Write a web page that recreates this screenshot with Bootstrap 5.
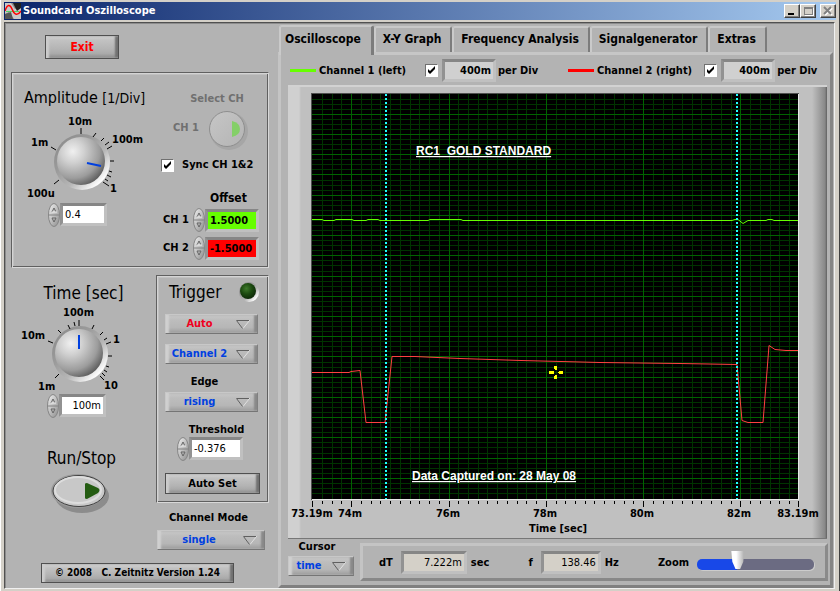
<!DOCTYPE html>
<html lang="en">
<head>
<meta charset="utf-8">
<meta name="viewport" content="width=device-width, initial-scale=1">
<title>Soundcard Oszilloscope</title>
<link href="https://cdn.jsdelivr.net/npm/bootstrap@5.3.0/dist/css/bootstrap.min.css" rel="stylesheet">
<style>
:root{--face:#b3b3b3;--blue:#0040e0}
body{background:#d4d0c8;font:bold 11px/14px "DejaVu Sans Condensed","DejaVu Sans",sans-serif;color:#000;padding:2px 3px 2px 3px;border-left:1px solid #fff;border-right:1px solid #404040}
svg{display:block}
svg text{font:bold 11px "DejaVu Sans Condensed","DejaVu Sans",sans-serif}
svg .note text{font:bold 12px "Liberation Sans",Arial,sans-serif}
.titlebar{background:linear-gradient(90deg,#0a246a,#a6caf0);height:18px;color:#fff;padding:0 0 0 1px}
.titlebar h1{font:bold 11px/18px "DejaVu Sans Condensed","DejaVu Sans",sans-serif;margin:0 0 0 2px}
.winbtn{width:16px;height:14px;padding:0;background:#d4d0c8;border:1px solid;border-color:#fff #404040 #404040 #fff;box-shadow:inset -1px -1px #808080}
.client{background:var(--face);margin-top:2px;border:1px solid;border-color:#505050 #f0f0f0 #f0f0f0 #505050;box-shadow:inset 1px 1px #8c8c8c;margin-right:1px}
.controls{width:273px;padding:12px 9px 2px 6px}
.groove{border:1px solid;border-color:#606060 #d8d8d8 #d8d8d8 #606060;box-shadow:inset 1px 1px #d4d4d4,inset -1px -1px #606060,inset 2px 2px #c0c0c0}
.push{font:inherit;color:#000;border:1px solid #505050;border-radius:0;padding:0;text-align:center;
background:linear-gradient(180deg,#d4d4d4 0,#c2c2c2 4px,#b4b4b4 60%,#aaa 80%,#8a8a8a);box-shadow:inset 3px 0 2px #ccc,inset -3px 0 2px #707070}
.exit{width:74px;height:24px;margin-left:34px;color:#f00;font-size:12px}
.autoset{width:95px;height:21px;margin-top:12px}
.about{width:193px;height:20px;font-size:10px;white-space:pre;margin:13px 0 0 30px}
.big{font-size:17px;font-weight:normal;line-height:24px;margin:0}
.amphead{font-size:16px}
.mid{font-size:14px}
.pick{appearance:none;font:inherit;color:var(--blue);height:20px;width:93px;border:1px solid;border-color:#c8c8c8 #808080 #757575 #c8c8c8;border-radius:0;padding:0 24px 0 0;text-align:center;text-align-last:center;
background:url("data:image/svg+xml,%3Csvg xmlns='http://www.w3.org/2000/svg' width='14' height='9'%3E%3Cpath d='M0 .5H13.5L7 8.5' fill='none' stroke='%23e0e0e0'/%3E%3Cpath d='M13 .5H.5L6.500 8.500' fill='none' stroke='%23606060'/%3E%3C/svg%3E") no-repeat right 7px center,linear-gradient(180deg,#c8c8c8 0,#bdbdbd 5px,#b6b6b6 70%,#9c9c9c);box-shadow:inset 3px 0 2px #d0d0d0,inset -3px 0 2px #888}
.pick.stop{color:#f00020}
.pick.mode{width:108px;margin:5px 0 0 1px}
.well{font:inherit;color:#000;border:3px solid;border-color:#868686 #c0c0c0 #c0c0c0 #929292;border-radius:0;padding:0 2px;min-width:0;height:23px;background:#fff}
.well.plain{font-weight:normal}
.well.ch1{background:#66ff00}
.well.ch2{background:#f00}
.well.shade{background:#d0d0d0;margin-right:2px}
.well.tan{background:#d4d0c8;font-weight:normal}
.w-num{width:47px}
.w-off{width:54px}
.w-dt{width:66px}
.w-freq{width:60px}
.tick{appearance:none;width:13px;height:13px;margin:0;border:1px solid;border-color:#707070 #fff #fff #707070;background:#fff;flex:none}
.tick:checked{background:#fff url("data:image/svg+xml,%3Csvg xmlns='http://www.w3.org/2000/svg' width='9' height='9'%3E%3Cpath d='M1 3v3l2 2 5-5V0L3 5z'/%3E%3C/svg%3E") no-repeat center}
.muted{color:#707070}
.amp{margin-top:13px;padding-bottom:7px}
.knobcol{width:137px}
.amp .knobcol{padding-top:13px}
.amp svg.knob{margin-top:3px}
.time{padding-top:6px}
.numrow{padding-left:36px}
.chcol{width:112px;padding-top:19px}
.offset{font-size:12px;padding:19px 0 3px 61px}
.chrow{padding-left:14px}
.trigger{width:113px;padding:4px 8px 8px}
.trigger .pick{margin-top:10px}
.trigger label{margin-top:11px}
.trigger label + .pick{margin-top:3px}
.lower{margin-top:7px}
.runstop{padding-top:28px}
.flat{border:0;background:none;padding:0}
/* tabs and display */
.tabs{padding:2px 0 0 1px;margin-bottom:-3px;position:relative}
.tabs .tab{font:bold 12px/20px "DejaVu Sans Condensed","DejaVu Sans",sans-serif;color:#000;background:var(--face);border:0;border-left:2px solid #cacaca;border-right:2px solid #7c7c7c;border-top:2px solid #c8c8c8;border-radius:3px 3px 0 0;height:26px;padding:0 9px 2px 7px;margin-top:1px;margin-bottom:3px}
.tabs .tab.active{height:30px;margin:0;padding:0 10px 5px 4px;border-right-width:3px}
.sheet{border:3px solid;border-color:#c6c6c6 #858585 #808080 #c4c4c4;margin-right:1px}
.legend-row{padding:4px 0 3px 9px}
.legend-row label{min-width:94px;margin-right:12px}
.swatch{width:26px;height:3px;flex:none;margin-right:3px}
.green{background:#66ff00}
.red{background:#f00}
.screen{margin:0 3px 0 7px;border-top:2px solid #d2d2d2;border-bottom:1px solid #777;background:linear-gradient(90deg,#d0d0d0 0,#d0d0d0 11px,#c0c0c0 13px,#c0c0c0 calc(100% - 15px),#888 calc(100% - 2px),#606060)}
.ridge{border:3px solid;border-color:#c4c4c4 #8a8a8a #888 #c4c4c4;margin:4px 2px 0 6px;padding:1px 11px 0 16px;min-height:38px}
.cursorbox{margin-left:7px;width:66px;padding-top:1px}
.cursorbox .pick{width:66px;margin-top:2px}
.zoomer{appearance:none;width:117px;height:20px;background:none;margin:4px 0 0}
.zoomer::-webkit-slider-runnable-track{height:11px;border-radius:5px;background:linear-gradient(90deg,#1848e8 34%,#6b6b82 34%);box-shadow:1px 1px #ccc}
.zoomer::-webkit-slider-thumb{appearance:none;width:13px;height:18px;margin-top:-8px;background:linear-gradient(90deg,#fff 40%,#b0b0b0);clip-path:polygon(0 0,100% 0,92% 60%,68% 100%,32% 100%,8% 60%)}
</style>
</head>
<body class="min-vh-100 d-flex flex-column">
<svg width="0" height="0" class="position-absolute" aria-hidden="true">
  <defs>
    <linearGradient id="rim" x1="0" y1="0" x2="1" y2="1"><stop offset="0" stop-color="#888"/><stop offset=".35" stop-color="#9a9a9a"/><stop offset=".6" stop-color="#b6b6b6"/><stop offset=".85" stop-color="#fff"/></linearGradient>
    <radialGradient id="dome" cx=".33" cy=".3" r=".8"><stop offset="0" stop-color="#f0f0f0"/><stop offset=".3" stop-color="#d0d0d0"/><stop offset=".7" stop-color="#9c9c9c"/><stop offset="1" stop-color="#505050"/></radialGradient>
    <linearGradient id="arrowfill" x1="0" y1="0" x2="1" y2="1"><stop offset="0" stop-color="#f2f2f2"/><stop offset="1" stop-color="#8c8c8c"/></linearGradient>
    <linearGradient id="soft" x1="0" y1="0" x2="1" y2="1"><stop offset="0" stop-color="#c6c6c6"/><stop offset="1" stop-color="#b4b4b4"/></linearGradient>
    <radialGradient id="led" cx=".4" cy=".35" r=".7"><stop offset="0" stop-color="#3f7a2c"/><stop offset=".5" stop-color="#1c4a10"/><stop offset="1" stop-color="#0c2608"/></radialGradient>
    <symbol id="spin" viewBox="0 0 12 24">
      <ellipse cx="6" cy="12" rx="5.500" ry="11.500" fill="url(#arrowfill)" stroke="#858585"/>
      <path d="M1 12h10" stroke="#808080"/><path d="M4 9 6 5 8 9M4 15h4L6 19z" fill="none" stroke="#666"/>
      <path d="M4 9h5" stroke="#eee"/>
    </symbol>
  </defs>
</svg>

<header class="titlebar d-flex align-items-center">
  <svg width="16" height="16" aria-hidden="true"><rect width="16" height="16" fill="#8a8a8a"/><path d="M0 0h6l4 6 6-2v12H9L4 9 0 11z" fill="#c9c9c9"/><path d="M8 0h8v5l-4 3z" fill="#202020"/><path d="M0 11l6-2 2 7H0z" fill="#555"/><path d="M1 8.500h13" stroke="#50d060"/><path d="M0 8C2 1 5 1 7 6s5 8 9 2" fill="none" stroke="#f00" stroke-width="1.500"/></svg>
  <h1>Soundcard Oszilloscope</h1>
  <div class="ms-auto d-flex">
    <button class="winbtn" aria-label="Minimize"><svg width="14" height="12"><path d="M3 8h6v2H3z"/></svg></button>
    <button class="winbtn" aria-label="Maximize" disabled><svg width="14" height="12" fill="none" shape-rendering="crispEdges"><path d="M3.500 2.500h8v7h-8zM3 3.500h9" stroke="#808080"/><path d="M12.500 3v7.500H4" stroke="#fff"/></svg></button>
    <button class="winbtn ms-1" aria-label="Close" disabled><svg width="14" height="12" fill="none"><path d="M4 3l7 7M11 3l-7 7" stroke="#fff" stroke-width="2"/><path d="M3 2l7 7M10 2L3 9" stroke="#808080" stroke-width="2"/></svg></button>
  </div>
</header>

<main class="client d-flex flex-grow-1">
  <aside class="controls flex-shrink-0">
    <button class="push exit d-block">Exit</button>

    <section class="groove amp d-flex" aria-label="Amplitude">
      <div class="knobcol">
        <h2 class="big amphead ps-2 ms-1 text-nowrap">Amplitude <span class="mid">[1/Div]</span></h2>
        <svg class="knob" width="137" height="90" viewBox="12 113 137 90" role="img" aria-label="Amplitude knob">
          <circle cx="82" cy="162" r="28" fill="url(#rim)"/><circle cx="81" cy="161" r="24" fill="url(#dome)"/>
          <path d="M87 163l14 3" stroke="#0040e0" stroke-width="2"/>
          <path d="M81 128v6M51 147l5 3M54 184l5-4M93 137l3-4M101 141l3-3M105 145l4-3M107 149l5-3M110 161h4M109 171l3 1M107 175l4 2M105 179l3 2M103 182l6 4" stroke="#000"/>
          <text x="68" y="125">10m</text><text x="31" y="146">1m</text><text x="112" y="143">100m</text><text x="27" y="197">100u</text><text x="110" y="192">1</text>
        </svg>
        <div class="d-flex numrow">
          <svg class="flex-shrink-0" width="12" height="24"><use href="#spin"/></svg>
          <input class="well plain w-num" aria-label="Amplitude per division" value="0.4">
        </div>
      </div>
      <div class="chcol d-flex flex-column">
        <div class="muted text-center ps-4">Select CH</div>
        <div class="d-flex align-items-center muted ps-4">
          <span class="text-nowrap">CH 1</span>
          <button class="flat ms-1" aria-label="Select channel 1" disabled><svg width="46" height="44"><circle cx="26" cy="25" r="19" fill="#a6a6a6"/><circle cx="24" cy="23" r="17.500" fill="url(#soft)" stroke="#8e8e8e"/><path d="M29 15q8 2 8 8t-8 8z" fill="#84cf68"/></svg></button>
        </div>
        <label class="d-flex align-items-center gap-2 text-nowrap mt-2 ps-2 ms-1"><input class="tick" type="checkbox" checked> Sync CH 1&amp;2</label>
        <div class="offset">Offset</div>
        <label class="d-flex align-items-center chrow"><span class="text-nowrap me-1">CH 1</span>
          <svg class="flex-shrink-0" width="12" height="24"><use href="#spin"/></svg><input class="well ch1 w-off" value="1.5000"></label>
        <label class="d-flex align-items-center chrow mt-1"><span class="text-nowrap me-1">CH 2</span>
          <svg class="flex-shrink-0" width="12" height="24"><use href="#spin"/></svg><input class="well ch2 w-off" value="-1.5000"></label>
      </div>
    </section>

    <div class="d-flex justify-content-between lower">
      <section class="knobcol time" aria-label="Time">
        <h2 class="big text-center ps-2">Time [sec]</h2>
        <svg width="137" height="89" viewBox="12 306 137 89" role="img" aria-label="Time knob">
          <circle cx="81" cy="355" r="28" fill="url(#rim)"/><circle cx="80" cy="354" r="24" fill="url(#dome)"/>
          <path d="M80 336v14" stroke="#0040e0" stroke-width="2"/>
          <path d="M80 321v6M49 342l5 2M56 379l4-4M59 331l3 3M69 326l2 4M75 323l1 4M93 330l2-4M101 336l3-3M105 341l3-2M107 345l5-2M109 357h4M107 367l3 1M105 371l3 2M103 374l3 3M101 377l4 4" stroke="#000"/>
          <text x="64" y="317">100m</text><text x="22" y="340">10m</text><text x="114" y="344">1</text><text x="39" y="391">1m</text><text x="105" y="390">10</text>
        </svg>
        <div class="d-flex numrow">
          <svg class="flex-shrink-0" width="12" height="24"><use href="#spin"/></svg>
          <input class="well plain w-num text-end" aria-label="Time per division" value="100m">
        </div>
        <h2 class="big text-center runstop ps-1">Run/Stop</h2>
        <button class="flat d-block mx-auto" aria-label="Run or stop"><svg width="64" height="46"><ellipse cx="34" cy="26" rx="27" ry="17" fill="#8c8c8c"/><ellipse cx="30" cy="21" rx="27" ry="17" fill="#999"/><ellipse cx="31" cy="21" rx="26" ry="15.500" fill="#c8c8c8" stroke="#404040"/><ellipse cx="30" cy="20" rx="23" ry="13" fill="none" stroke="#ddd" stroke-width="2"/><path d="M37 14q0-1 2-1l11 5q3 2 0 5l-11 6q-2 0-2-1z" fill="#245c12"/></svg></button>
      </section>

      <div>
        <section class="trigger groove d-flex flex-column" aria-label="Trigger">
          <div class="d-flex align-items-center justify-content-between ps-1"><h2 class="big">Trigger</h2>
            <svg width="22" height="22" role="img" aria-label="Trigger light off"><circle cx="11" cy="11" r="10" fill="url(#rim)"/><circle cx="10" cy="10" r="8" fill="url(#led)"/></svg></div>
          <select class="pick stop" aria-label="Trigger mode"><option>Auto</option></select>
          <select class="pick" aria-label="Trigger source"><option>Channel 2</option></select>
          <label class="text-center pe-3" for="edge">Edge</label>
          <select class="pick" id="edge"><option>rising</option></select>
          <label class="text-center ps-2" for="thr">Threshold</label>
          <div class="d-flex ps-2 ms-1"><svg class="flex-shrink-0" width="12" height="24"><use href="#spin"/></svg><input id="thr" class="well plain w-off" value="-0.376"></div>
          <button class="push autoset">Auto Set</button>
        </section>
        <label class="d-block text-center mt-2 pe-2" for="mode">Channel Mode</label>
        <select class="pick mode" id="mode"><option>single</option></select>
      </div>
    </div>
    <button class="push about d-block">© 2008   C. Zeitnitz Version 1.24</button>
  </aside>

  <div class="flex-grow-1 d-flex flex-column">
    <div class="tabs d-flex" role="tablist">
      <button class="tab active" role="tab" aria-selected="true">Oscilloscope</button>
      <button class="tab" role="tab">X-Y Graph</button>
      <button class="tab" role="tab">Frequency Analysis</button>
      <button class="tab" role="tab">Signalgenerator</button>
      <button class="tab" role="tab">Extras</button>
    </div>
    <div class="sheet flex-grow-1">
      <div class="legend-row row g-0">
        <div class="col-6 d-flex align-items-center text-nowrap"><span class="swatch green"></span><label for="c1">Channel 1 (left)</label><input id="c1" class="tick me-1" type="checkbox" checked><input class="well shade w-off text-end" aria-label="Channel 1 scale" value="400m">per Div</div>
        <div class="col-6 d-flex align-items-center text-nowrap ps-2"><span class="swatch red"></span><label for="c2">Channel 2 (right)</label><input id="c2" class="tick me-1" type="checkbox" checked><input class="well shade w-off text-end" aria-label="Channel 2 scale" value="400m">per Div</div>
      </div>
      <div class="screen">
        <svg id="scope" class="w-100" viewBox="288 87 539 451" role="img" aria-label="Oscilloscope display">
          <g shape-rendering="crispEdges">
            <path d="M311 93h488v407H311z" fill="#505050"/>
            <path d="M312 94h487v405H312z"/>
            <path d="M799 94v406H312v-1h486V94z" fill="#e8e8e8"/>
            <path id="minor" fill="#003400"/><path id="major" fill="#006400"/><path id="ticks"/>
          </g>
          <g fill="none">
            <path d="M312 219.500H322L324 220.500H334L336 219.500H352L354 220.500H366L368 219.500H378L380 220.500H428L430 219.500H461L463 220.500H732L735 219.500H738L743 223.500L748 220.500H766L768 219.500H772L774 220.500H798" stroke="#66ff00"/>
            <path d="M312 372.500H349L351 371.500L360 370.500L366 422.500H385L392 356.500H415L460 358.500L521 360.500L561 361.500L600 362.500L680 363.500L737 364.500L742 420.500L748 422.500H763L769 345.500L775 349.500L786 350.500H798" stroke="#ff4040"/>
          </g>
          <path d="M386 94v405M737 94v405" stroke="#20ffff" stroke-width="2" stroke-dasharray="2 2"/>
          <path d="M554 366h3v3l-1 1h-1l-1-1zM554 379h3v-3l-1-1h-1l-1 1zM549 371v3h4l1-1v-1l-1-1zM563 371v3h-4l-1-1v-1l1-1z" fill="#ff0" shape-rendering="crispEdges"/>
          <g fill="#fff" class="note" text-decoration="underline"><text x="416" y="155" xml:space="preserve">RC1  GOLD STANDARD</text><text x="412" y="480">Data Captured on: 28 May 08</text></g>
          <g text-anchor="middle"><text x="312" y="517">73.19m</text><text x="350" y="517">74m</text><text x="448" y="517">76m</text><text x="545" y="517">78m</text><text x="642" y="517">80m</text><text x="739" y="517">82m</text><text x="798" y="517">83.19m</text><text x="558" y="532">Time [sec]</text></g>
        </svg>
      </div>
      <div class="d-flex">
        <div class="cursorbox flex-shrink-0"><label class="d-block text-center pe-2" for="cur">Cursor</label><select class="pick" id="cur"><option>time</option></select></div>
        <div class="ridge flex-grow-1 d-flex align-items-center text-nowrap">
          <label for="dt" class="me-2">dT</label><input id="dt" class="well tan w-dt text-end me-1" value="7.222m">sec
          <label for="fr" class="ms-auto me-2">f</label><input id="fr" class="well tan w-freq text-end me-1" value="138.46">Hz
          <label for="zm" class="ms-auto me-2">Zoom</label><input id="zm" class="zoomer" type="range" value="33">
        </div>
      </div>
    </div>
  </div>
</main>
<script src="https://cdn.jsdelivr.net/npm/bootstrap@5.3.0/dist/js/bootstrap.bundle.min.js"></script>
<script>
// Graticule: ten minor columns per 2 ms, four minor rows per major row
let minor = '', major = '', ticks = 'M312 501h1v6h-1zM798 501h1v6h-1z';
for (let k = -3; k <= 45; k++) {
  const x = Math.round(351.2 + 9.73 * k);
  if (x < 313 || x > 797) continue;
  const big = k % 10 === 0;
  const line = `M${x} 94h1v405h-1z`;
  if (big) major += line; else minor += line;
  ticks += `M${x} 501h1v${big ? 6 : 3}h-1z`;
}
for (let k = 1; k < 80; k++) {
  const y = Math.round(93.6 + 5.055 * k), line = `M312 ${y}h486v1h-486z`;
  if (k % 4 === 0) major += line; else minor += line;
}
document.getElementById('minor').setAttribute('d', minor);
document.getElementById('major').setAttribute('d', major);
document.getElementById('ticks').setAttribute('d', ticks);
</script>
</body>
</html>
